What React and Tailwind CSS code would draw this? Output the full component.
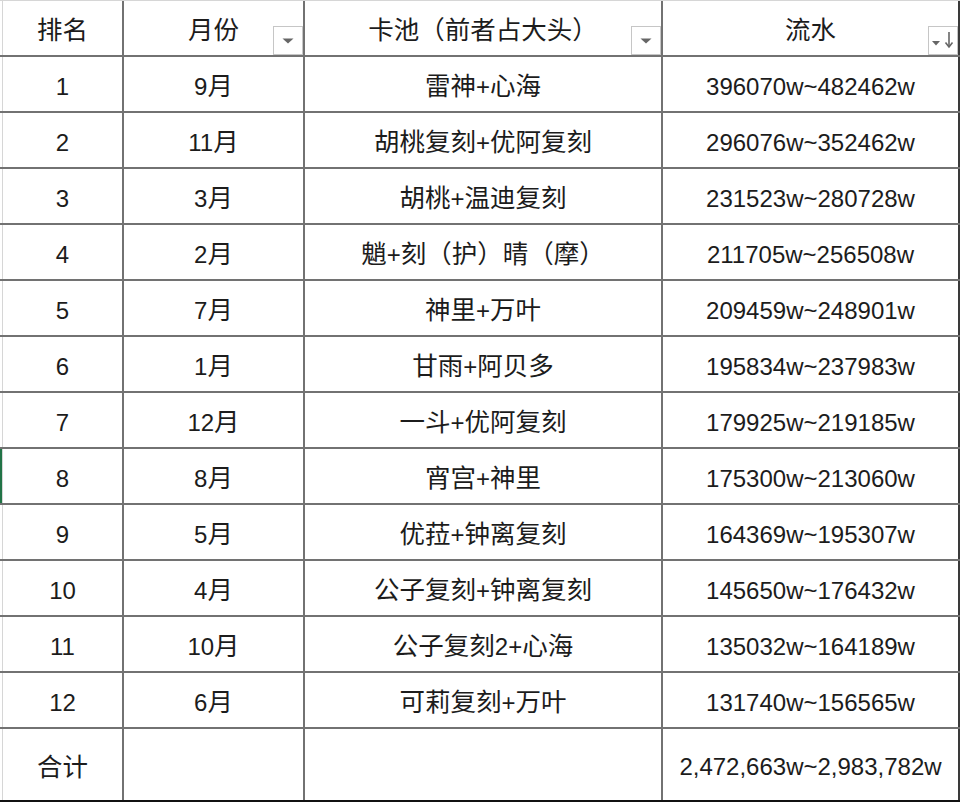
import React from "react";

const rows = [
  ["1", "9月", "雷神+心海", "396070w~482462w"],
  ["2", "11月", "胡桃复刻+优阿复刻", "296076w~352462w"],
  ["3", "3月", "胡桃+温迪复刻", "231523w~280728w"],
  ["4", "2月", "魈+刻（护）晴（摩）", "211705w~256508w"],
  ["5", "7月", "神里+万叶", "209459w~248901w"],
  ["6", "1月", "甘雨+阿贝多", "195834w~237983w"],
  ["7", "12月", "一斗+优阿复刻", "179925w~219185w"],
  ["8", "8月", "宵宫+神里", "175300w~213060w"],
  ["9", "5月", "优菈+钟离复刻", "164369w~195307w"],
  ["10", "4月", "公子复刻+钟离复刻", "145650w~176432w"],
  ["11", "10月", "公子复刻2+心海", "135032w~164189w"],
  ["12", "6月", "可莉复刻+万叶", "131740w~156565w"],
];

const cols = ["w-[121px]", "w-[181px]", "w-[358px]", "w-[297px]"];

// CJK glyphs in the sheet are drawn a bit larger than the Latin digits
function Mixed({ text }) {
  const parts = text.split(/([\u3000-\u9fff\uff00-\uffef]+)/).filter(Boolean);
  return parts.map((p, i) =>
    /[\u3000-\u9fff\uff00-\uffef]/.test(p) ? (
      <span key={i} className="text-[25.5px]">{p}</span>
    ) : (
      <span key={i}>{p}</span>
    )
  );
}

function FilterButton({ sorted }) {
  return (
    <div className="absolute right-0 bottom-0 w-[30px] h-[29px] bg-white border border-[#c6c6c6]">
      {sorted ? (
        <svg width="28" height="27" viewBox="0 0 28 27">
          <path d="M3 14 L11 14 L7 18.5 Z" fill="#666" />
          <path d="M20 5 L20 19" stroke="#666" strokeWidth="1.6" />
          <path d="M16.5 15.5 L20 20 L23.5 15.5" fill="none" stroke="#666" strokeWidth="1.6" />
        </svg>
      ) : (
        <svg width="28" height="27" viewBox="0 0 28 27">
          <path d="M8.5 11.5 L19.5 11.5 L14 16.5 Z" fill="#666" />
        </svg>
      )}
    </div>
  );
}

function Cell({ i, children, filter, sorted }) {
  return (
    <div
      className={`${cols[i]} relative flex items-center justify-center border-r-2 ${
        i === 3 ? "border-[#3a3a3a]" : "border-[#727272]"
      }`}
    >
      <span className="pt-[5px] whitespace-nowrap">
        {typeof children === "string" ? <Mixed text={children} /> : children}
      </span>
      {filter && <FilterButton sorted={sorted} />}
    </div>
  );
}

export default function App() {
  return (
    <div
      className="w-[960px] h-[802px] bg-white text-[#1c1c1c] text-[24px] overflow-hidden"
      style={{ fontFamily: '"Liberation Sans", "Noto Sans CJK SC", sans-serif' }}
    >
      <div className="flex flex-col border-t border-[#d6d6d6]">
        {/* header */}
        <div className="flex h-[56px] border-b-2 border-[#727272]">
          <div className="w-[2px]" />
          <div className="w-px bg-[#d6d6d6]" />
          <Cell i={0}>排名</Cell>
          <Cell i={1} filter>月份</Cell>
          <Cell i={2} filter>卡池（前者占大头）</Cell>
          <Cell i={3} filter sorted>流水</Cell>
        </div>
        {rows.map((r, idx) => (
          <div key={idx} className="flex h-[56px] border-b-2 border-[#727272]">
            <div className={`w-[2px] ${idx === 7 ? "bg-[#217346]" : ""}`} />
            <div className="w-px bg-[#d6d6d6]" />
            {r.map((v, i) => (
              <Cell key={i} i={i}>{v}</Cell>
            ))}
          </div>
        ))}
        <div className="flex h-[73px] border-b-2 border-[#111]">
          <div className="w-[2px]" />
          <div className="w-px bg-[#d6d6d6]" />
          <Cell i={0}>合计</Cell>
          <Cell i={1}></Cell>
          <Cell i={2}></Cell>
          <Cell i={3}>2,472,663w~2,983,782w</Cell>
        </div>
      </div>
    </div>
  );
}
